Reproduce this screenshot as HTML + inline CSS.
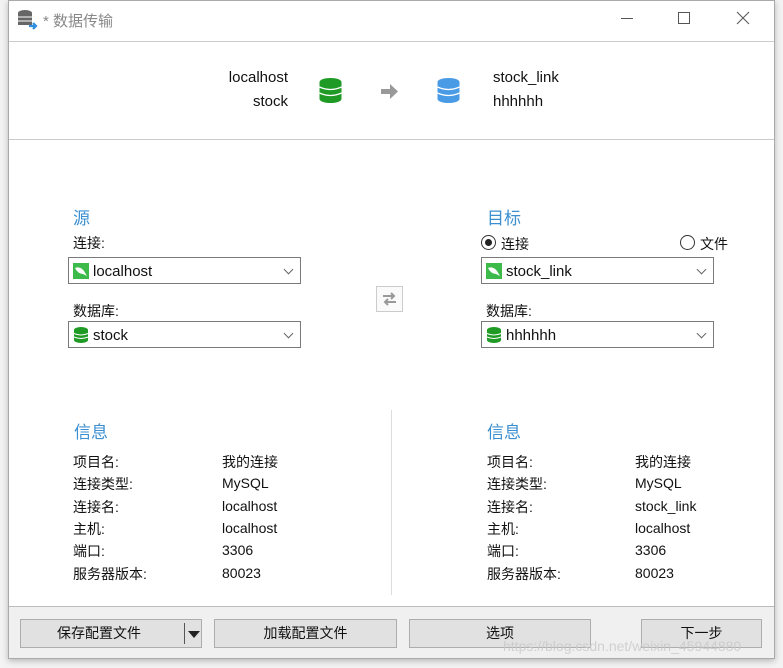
<!DOCTYPE html>
<html><head><meta charset="utf-8"><style>
*{margin:0;padding:0;box-sizing:border-box}
body{width:783px;height:668px;background:#f3f3f3;position:relative;overflow:hidden;font-family:"Liberation Sans","Noto Sans CJK SC",sans-serif;color:#111;font-size:14px}
.abs{position:absolute}
.win{left:8px;top:0;width:767px;height:659px;background:#fff;border:1px solid #aaa;box-shadow:0 2px 6px rgba(0,0,0,.25)}
.t{position:absolute;white-space:nowrap}
.hd{color:#3b8fd0;font-size:17px}
.sel{position:absolute;height:27px;width:233px;border:1px solid #7a7a7a;background:#fff}
.sel span{position:absolute;left:24px;top:5px;font-size:15px}
.sel .ic{position:absolute;left:4px;top:5px;width:16px;height:16px}
.sel .ar{position:absolute;right:8px;top:8px;width:7px;height:7px;border-right:1px solid #666;border-bottom:1px solid #666;transform:rotate(45deg)}
.btn{position:absolute;top:619px;height:29px;background:#e1e1e1;border:1px solid #adadad;text-align:center;line-height:27px;font-size:14px}
.info div{position:absolute;white-space:nowrap;font-size:14px}
</style></head><body>
<div class="abs win"></div>
<svg class="abs" style="left:17px;top:9px" width="22" height="22" viewBox="0 0 22 22"><ellipse cx="8" cy="4" rx="7" ry="3" fill="#666"/><rect x="1" y="4" width="14" height="12" fill="#666"/><path d="M1 8h14M1 12h14" stroke="#fff" stroke-width="1"/><path d="M12 17h6M16 14l3 3-3 3" stroke="#2f8ee0" stroke-width="2.2" fill="none"/></svg>
<div class="t" style="left:43px;top:10px;color:#888;font-size:15px">* 数据传输</div>
<div class="abs" style="left:621px;top:18px;width:12px;border-top:1px solid #555"></div>
<div class="abs" style="left:678px;top:12px;width:12px;height:12px;border:1px solid #555"></div>
<svg class="abs" style="left:736px;top:11px" width="14" height="14"><path d="M1 1L13 13M13 1L1 13" stroke="#555" stroke-width="1"/></svg>
<div class="abs" style="left:9px;top:41px;width:765px;border-top:1px solid #ccc"></div>
<div class="abs" style="left:9px;top:139px;width:765px;border-top:1px solid #ccc"></div>
<div class="t" style="right:495px;top:69px;font-size:15px">localhost</div>
<div class="t" style="right:495px;top:93px;font-size:15px">stock</div>
<svg class="abs" style="left:319px;top:78px" width="23" height="25"><ellipse cx="11.5" cy="4" rx="11" ry="4" fill="#1f9a25"/><rect x=".5" y="4" width="22" height="17" fill="#1f9a25"/><ellipse cx="11.5" cy="21" rx="11" ry="4" fill="#1f9a25"/><path d="M.5 9q11 5 22 0M.5 15q11 5 22 0" stroke="#fff" stroke-width="1.3" fill="none"/></svg>
<svg class="abs" style="left:381px;top:84px" width="17" height="15"><path d="M0 5h9V0l8 7.5-8 7.5V10H0z" fill="#999"/></svg>
<svg class="abs" style="left:437px;top:78px" width="23" height="25"><ellipse cx="11.5" cy="4" rx="11" ry="4" fill="#4a9be6"/><rect x=".5" y="4" width="22" height="17" fill="#4a9be6"/><ellipse cx="11.5" cy="21" rx="11" ry="4" fill="#4a9be6"/><path d="M.5 9q11 5 22 0M.5 15q11 5 22 0" stroke="#fff" stroke-width="1.3" fill="none"/></svg>
<div class="t" style="left:493px;top:69px;font-size:15px">stock_link</div>
<div class="t" style="left:493px;top:93px;font-size:15px">hhhhhh</div>
<div class="t hd" style="left:73px;top:204px">源</div>
<div class="t" style="left:73px;top:233px">连接:</div>
<div class="sel" style="left:68px;top:257px"><svg class="ic" viewBox="0 0 16 16"><rect width="16" height="16" fill="#3dbb4a"/><path d="M2 5q5-2 9 3l3 5-4-2q-5 0-8-6" fill="#fff"/></svg><span>localhost</span><i class="ar"></i></div>
<div class="t" style="left:73px;top:301px">数据库:</div>
<div class="sel" style="left:68px;top:321px"><svg class="ic" viewBox="0 0 16 16"><ellipse cx="8" cy="3" rx="7" ry="3" fill="#1f9a25"/><rect x="1" y="3" width="14" height="10" fill="#1f9a25"/><ellipse cx="8" cy="13" rx="7" ry="3" fill="#1f9a25"/><path d="M1 6.5q7 3 14 0M1 10q7 3 14 0" stroke="#fff" fill="none"/></svg><span>stock</span><i class="ar"></i></div>
<div class="abs" style="left:376px;top:286px;width:27px;height:26px;border:1px solid #ccc;background:#fafafa"></div>
<svg class="abs" style="left:381px;top:291px" width="17" height="16"><path d="M2 5h11M10 2l3 3-3 3M15 11H4M7 8l-3 3 3 3" stroke="#999" stroke-width="2" fill="none"/></svg>
<div class="t hd" style="left:487px;top:204px">目标</div>
<div class="abs" style="left:481px;top:235px;width:15px;height:15px;border:1px solid #333;border-radius:50%"></div>
<div class="abs" style="left:485px;top:239px;width:7px;height:7px;background:#222;border-radius:50%"></div>
<div class="t" style="left:501px;top:234px">连接</div>
<div class="abs" style="left:680px;top:235px;width:15px;height:15px;border:1px solid #333;border-radius:50%"></div>
<div class="t" style="left:700px;top:234px">文件</div>
<div class="sel" style="left:481px;top:257px"><svg class="ic" viewBox="0 0 16 16"><rect width="16" height="16" fill="#3dbb4a"/><path d="M2 5q5-2 9 3l3 5-4-2q-5 0-8-6" fill="#fff"/></svg><span>stock_link</span><i class="ar"></i></div>
<div class="t" style="left:486px;top:301px">数据库:</div>
<div class="sel" style="left:481px;top:321px"><svg class="ic" viewBox="0 0 16 16"><ellipse cx="8" cy="3" rx="7" ry="3" fill="#1f9a25"/><rect x="1" y="3" width="14" height="10" fill="#1f9a25"/><ellipse cx="8" cy="13" rx="7" ry="3" fill="#1f9a25"/><path d="M1 6.5q7 3 14 0M1 10q7 3 14 0" stroke="#fff" fill="none"/></svg><span>hhhhhh</span><i class="ar"></i></div>
<div class="t hd" style="left:74px;top:418px">信息</div>
<div class="t hd" style="left:487px;top:418px">信息</div>
<div class="abs" style="left:391px;top:410px;height:185px;border-left:1px solid #ddd"></div>
<div class="info">
<div style="left:73px;top:452px">项目名:</div><div style="left:222px;top:452px">我的连接</div>
<div style="left:73px;top:474px">连接类型:</div><div style="left:222px;top:475px">MySQL</div>
<div style="left:73px;top:497px">连接名:</div><div style="left:222px;top:498px">localhost</div>
<div style="left:73px;top:519px">主机:</div><div style="left:222px;top:520px">localhost</div>
<div style="left:73px;top:541px">端口:</div><div style="left:222px;top:542px">3306</div>
<div style="left:73px;top:564px">服务器版本:</div><div style="left:222px;top:565px">80023</div>
<div style="left:487px;top:452px">项目名:</div><div style="left:635px;top:452px">我的连接</div>
<div style="left:487px;top:474px">连接类型:</div><div style="left:635px;top:475px">MySQL</div>
<div style="left:487px;top:497px">连接名:</div><div style="left:635px;top:498px">stock_link</div>
<div style="left:487px;top:519px">主机:</div><div style="left:635px;top:520px">localhost</div>
<div style="left:487px;top:541px">端口:</div><div style="left:635px;top:542px">3306</div>
<div style="left:487px;top:564px">服务器版本:</div><div style="left:635px;top:565px">80023</div>
</div>
<div class="abs" style="left:9px;top:606px;width:765px;height:52px;background:#f0f0f0;border-top:1px solid #bbb"></div>
<div class="btn" style="left:20px;width:182px"><span style="position:absolute;left:36px">保存配置文件</span><span style="position:absolute;left:163px;top:3px;height:21px;border-left:1px solid #555"></span><span style="position:absolute;left:167px;top:11px;border-left:6px solid transparent;border-right:6px solid transparent;border-top:7px solid #222"></span></div>
<div class="btn" style="left:214px;width:183px">加载配置文件</div>
<div class="btn" style="left:409px;width:182px">选项</div>
<div class="btn" style="left:641px;width:121px">下一步</div>
<div class="t" style="left:503px;top:638px;color:rgba(200,200,200,.8);font-size:14px">https://blog.csdn.net/weixin_45944880</div>
</body></html>
